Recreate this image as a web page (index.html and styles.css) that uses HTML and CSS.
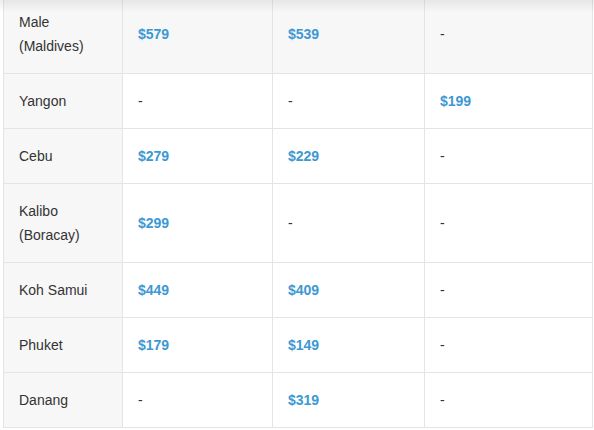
FILE: index.html
```html
<!DOCTYPE html>
<html lang="en">
<head>
<meta charset="utf-8">
<title>Fares</title>
<link rel="stylesheet" href="styles.css">
</head>
<body>
<div class="wrap">
  <div class="fade"></div>
  <table class="fares">
    <colgroup>
      <col class="c1"><col class="c2"><col class="c3"><col class="c4">
    </colgroup>
    <tbody>
      <tr class="hl"><td class="city">Male<br>(Maldives)</td><td class="price">$579</td><td class="price">$539</td><td>-</td></tr>
      <tr><td class="city">Yangon</td><td>-</td><td>-</td><td class="price">$199</td></tr>
      <tr><td class="city">Cebu</td><td class="price">$279</td><td class="price">$229</td><td>-</td></tr>
      <tr><td class="city">Kalibo<br>(Boracay)</td><td class="price">$299</td><td>-</td><td>-</td></tr>
      <tr><td class="city">Koh Samui</td><td class="price">$449</td><td class="price">$409</td><td>-</td></tr>
      <tr><td class="city">Phuket</td><td class="price">$179</td><td class="price">$149</td><td>-</td></tr>
      <tr><td class="city">Danang</td><td>-</td><td class="price">$319</td><td>-</td></tr>
    </tbody>
  </table>
</div>
</body>
</html>
```
FILE: styles.css
```css
html, body {
  margin: 0;
  padding: 0;
  background: #fff;
}
body {
  font-family: "Liberation Sans", Arial, sans-serif;
  font-size: 14px;
  color: #333;
  overflow: hidden;
}
.wrap {
  position: relative;
  padding-left: 3px;
  margin-top: -6px;
}
.fade {
  position: absolute;
  left: 0;
  right: 0;
  top: 6px;
  height: 12px;
  background: linear-gradient(to bottom, rgba(0,0,0,0.07), rgba(0,0,0,0));
  pointer-events: none;
}
.fares {
  border-collapse: collapse;
  table-layout: fixed;
  width: 589px;
}
.c1 { width: 119px; }
.c2 { width: 150px; }
.c3 { width: 152px; }
.c4 { width: 168px; }
.fares td {
  border: 1px solid #e4e4e4;
  padding: 15px 15px;
  line-height: 24px;
  vertical-align: middle;
  text-align: left;
}
.fares td.city {
  background: #f7f7f7;
}
.fares tr.hl td {
  background: #f7f7f7;
}
.fares td.price {
  color: #3d98d3;
  font-weight: bold;
}
```
